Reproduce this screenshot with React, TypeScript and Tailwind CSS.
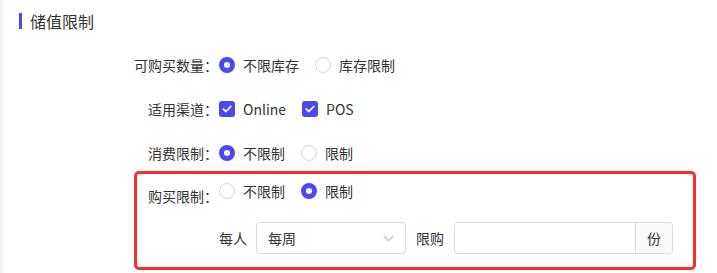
import React from "react";

const BLUE = "bg-[#4a48f2]";

function Radio({ checked, label }: { checked: boolean; label: string }) {
  return (
    <label className="flex items-center mr-[8px]">
      <span
        className={
          checked
            ? "box-border w-4 h-4 rounded-full border-[5px] border-[#4a48f2] bg-white"
            : "box-border w-4 h-4 rounded-full border border-[#d9d9d9] bg-white"
        }
      />
      <span className="px-[8px] leading-[22px]">{label}</span>
    </label>
  );
}

function Check({ label }: { label: string }) {
  return (
    <label className="flex items-center mr-[8px]">
      <span className={`flex items-center justify-center w-4 h-4 rounded-[3px] ${BLUE}`}>
        <svg width="10" height="8" viewBox="0 0 10 8" fill="none">
          <path d="M1.3 4.1 L3.9 6.5 L8.7 1.5" stroke="white" strokeWidth="1.8" strokeLinecap="round" strokeLinejoin="round" />
        </svg>
      </span>
      <span className="px-[8px] leading-[22px]">{label}</span>
    </label>
  );
}

function Row({ label, children }: { label: string; children: React.ReactNode }) {
  return (
    <div className="flex items-center h-8">
      <div className="w-[215px] text-right">{label}</div>
      <div className="flex items-center ml-[1px]">{children}</div>
    </div>
  );
}

export default function App() {
  return (
    <div
      className="flex w-[717px] h-[273px] bg-white text-[14px] text-[#333]"
      style={{ fontFamily: '"Noto Sans CJK SC", "Noto Sans", sans-serif' }}
    >
      <div className="w-[3px] bg-[#f0f2f5]" />
      <div className="flex-1 flex flex-col">
        <div className="flex items-center mt-[13px] h-4 ml-4">
          <div className={`w-[3px] h-4 ${BLUE}`} />
          <div className="ml-[8px] text-[16px] leading-4">储值限制</div>
        </div>
        <div className="flex flex-col gap-3 mt-[20px]">
          <Row label="可购买数量：">
            <Radio checked label="不限库存" />
            <Radio checked={false} label="库存限制" />
          </Row>
          <Row label="适用渠道：">
            <Check label="Online" />
            <Check label="POS" />
          </Row>
          <Row label="消费限制：">
            <Radio checked label="不限制" />
            <Radio checked={false} label="限制" />
          </Row>
        </div>
        <div className="ml-[131px] mt-[2px] w-[562px] h-[99px] box-border border-[3px] border-[#fe2b2b] rounded-[5px] flex flex-col">
          <div className="flex items-start pt-[9px]">
            <div className="w-[81px] text-right leading-[22px] mt-[2px]">购买限制：</div>
            <div className="flex items-center ml-[1px] h-4">
              <Radio checked={false} label="不限制" />
              <Radio checked label="限制" />
            </div>
          </div>
          <div className="flex items-center mt-[15px] ml-[81px]">
            <div className="w-[38px] pl-[1px]">每人</div>
            <div className="box-border flex items-center justify-between w-[150px] h-8 border border-[#d9d9d9] rounded-[4px] pl-[11px] pr-[11px]">
              <span>每周</span>
              <svg width="11" height="7" viewBox="0 0 11 7" fill="none">
                <path d="M0.8 0.8 L5.5 5.6 L10.2 0.8" stroke="#bfbfbf" strokeWidth="1.1" />
              </svg>
            </div>
            <div className="ml-[10px] mr-[10px]">限购</div>
            <div className="box-border flex w-[219px] h-8 border border-[#d9d9d9] rounded-[4px] overflow-hidden">
              <div className="flex-1" />
              <div className="w-[37px] bg-[#fafafa] border-l border-[#d9d9d9] flex items-center justify-center">份</div>
            </div>
          </div>
        </div>
      </div>
    </div>
  );
}
